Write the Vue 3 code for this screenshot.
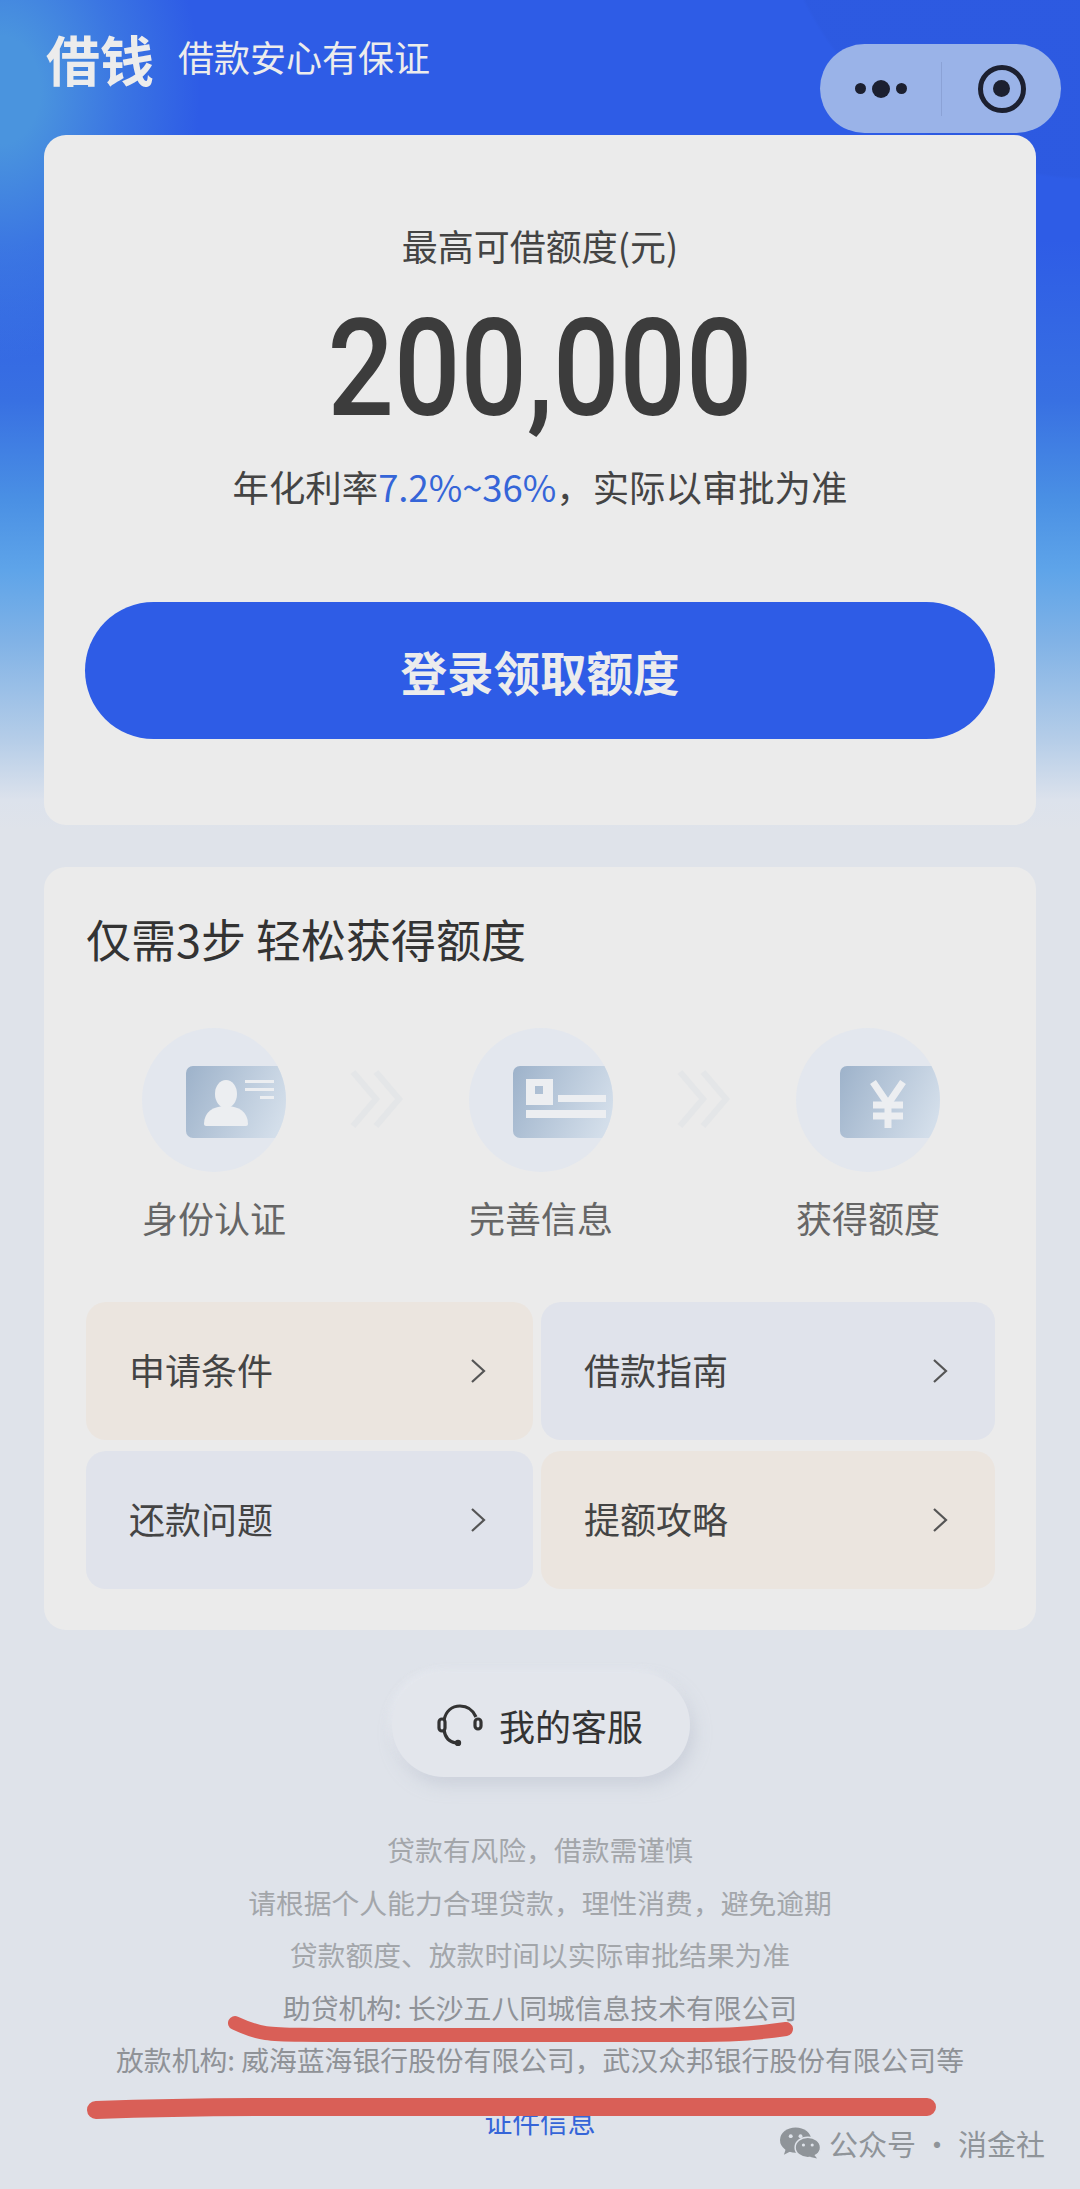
<script setup>
const steps = ['身份认证', '完善信息', '获得额度']
const tiles = [
  { label: '申请条件', tone: 'warm' },
  { label: '借款指南', tone: 'cool' },
  { label: '还款问题', tone: 'cool' },
  { label: '提额攻略', tone: 'warm' }
]
const notes = [
  '贷款有风险，借款需谨慎',
  '请根据个人能力合理贷款，理性消费，避免逾期',
  '贷款额度、放款时间以实际审批结果为准',
  '助贷机构: 长沙五八同城信息技术有限公司',
  '放款机构: 威海蓝海银行股份有限公司，武汉众邦银行股份有限公司等'
]
</script>

<template>
  <div class="page">
    <header class="head">
      <span class="brand">借钱</span>
      <span class="slogan">借款安心有保证</span>
      <div class="capsule">
        <div class="dots"><i></i><b></b><i></i></div>
        <div class="sep"></div>
        <div class="target"><span></span></div>
      </div>
    </header>

    <section class="card quota">
      <div class="quota-label">最高可借额度(元)</div>
      <div class="amount">200,000</div>
      <div class="rate">年化利率<em>7.2%~36%</em>，实际以审批为准</div>
      <button class="cta">登录领取额度</button>
    </section>

    <section class="card guide">
      <h2 class="title">仅需3步 轻松获得额度</h2>
      <div class="steps">
        <svg width="0" height="0" class="defs">
          <defs>
            <linearGradient id="cardFill" x1="0" y1="0" x2="1" y2="0.3">
              <stop offset="0" stop-color="#9db2ca" />
              <stop offset="1" stop-color="#d3deea" />
            </linearGradient>
            <clipPath id="disc"><circle cx="72" cy="72" r="72" /></clipPath>
          </defs>
        </svg>
        <template v-for="(step, idx) in steps" :key="step">
          <div class="step">
            <svg class="disc" viewBox="0 0 144 144">
              <circle cx="72" cy="72" r="72" fill="#e3e7ee" />
              <g clip-path="url(#disc)">
                <rect x="44" y="38" width="110" height="72" rx="7" fill="url(#cardFill)" />
              </g>
              <g v-if="idx === 0" fill="#eceef1">
                <ellipse cx="84" cy="66" rx="11" ry="14" />
                <path d="M62 96c0-12 9-18 22-18s22 6 22 18c0 1-1 2-2 2H64c-1 0-2-1-2-2z" />
                <rect x="103" y="52" width="29" height="3" />
                <rect x="103" y="60" width="29" height="3" />
                <rect x="118" y="68" width="14" height="3" />
              </g>
              <g v-else-if="idx === 1" fill="#eceef1">
                <path fill-rule="evenodd" d="M57 51h27v26H57zM66 58v8h8v-8z" />
                <rect x="89" y="67" width="48" height="7" />
                <rect x="57" y="82" width="80" height="8" />
              </g>
              <g v-else fill="none" stroke="#eceef1" stroke-width="7">
                <path d="M77 54l15 22 15-22M92 76v24" />
                <path d="M77 77h30M77 88h30" />
              </g>
            </svg>
            <div class="step-name">{{ step }}</div>
          </div>
          <svg v-if="idx < 2" class="arrows" viewBox="0 0 56 58" fill="none" stroke="#e4e6e8" stroke-width="6">
            <path d="M3 2l23 27-23 27M26 2l23 27-23 27" />
          </svg>
        </template>
      </div>
      <div class="tiles">
        <div v-for="tile in tiles" :key="tile.label" class="tile" :class="tile.tone">
          <span>{{ tile.label }}</span>
          <svg class="chev" viewBox="0 0 16 24" fill="none" stroke="#555" stroke-width="2.2">
            <path d="M2 1l12 11L2 23" />
          </svg>
        </div>
      </div>
    </section>

    <button class="service">
      <svg class="headset" viewBox="0 0 46 42" fill="none" stroke="#333" stroke-width="3.2">
        <path d="M7 16C9 7 15 2 23 2s13 4 16 11" />
        <path d="M7 26c1 7 5 12 12 13" />
        <rect x="2" y="15" width="6" height="12" rx="3" />
        <rect x="38" y="15" width="6" height="10" rx="3" />
        <circle cx="21" cy="39" r="1.6" fill="#333" />
      </svg>
      <span>我的客服</span>
    </button>

    <div class="notes">
      <p v-for="note in notes" :key="note">{{ note }}</p>
      <a class="license">证件信息</a>
    </div>

    <svg class="marks" viewBox="0 0 1080 2189" fill="none" stroke="#d95f57" stroke-linecap="round">
      <path d="M235 2023c30 14 40 11 90 12h350c50 0 70 0 111-6" stroke-width="14" />
      <path d="M96 2110c60-2 120-3 200-3h631" stroke-width="18" />
    </svg>

    <div class="watermark">
      <svg class="wechat" viewBox="0 0 42 32" fill="#8f9499">
        <ellipse cx="16" cy="13" rx="16" ry="13" />
        <path d="M6 22l-2 6 8-4z" />
        <ellipse cx="28.500" cy="20.500" rx="13" ry="10.500" stroke="#dfe3ea" stroke-width="1.500" />
        <path d="M35 28l3 4-8-2z" />
        <circle cx="11" cy="9" r="2" fill="#dfe3ea" />
        <circle cx="21" cy="9" r="2" fill="#dfe3ea" />
        <circle cx="24" cy="18" r="1.600" fill="#dfe3ea" />
        <circle cx="33" cy="18" r="1.600" fill="#dfe3ea" />
      </svg>
      <span>公众号 · 消金社</span>
    </div>
  </div>
</template>

<style>
html,
body {
  margin: 0;
  background: #dfe3ea;
}
</style>

<style scoped>
.page {
  position: relative;
  box-sizing: border-box;
  height: 2189px;
  overflow: hidden;
  padding: 0 44px;
  font-family: "Noto Sans CJK SC", "Noto Sans", sans-serif;
  color: #333;
  background:
    radial-gradient(ellipse 200px 270px at 0 90px, rgba(74, 148, 222, 1) 20%, rgba(74, 148, 222, 0.45) 60%, rgba(74, 148, 222, 0) 100%),
    radial-gradient(circle 320px at 1090px -140px, rgba(35, 70, 180, 0.1) 99%, rgba(35, 70, 180, 0) 100%),
    linear-gradient(180deg, #2e5ce6 0, #2e5ce6 240px, #3870e2 400px, #4a90e4 500px, #5ea4e9 570px, #80b2e6 640px, #b5cde8 740px, #dce2ec 800px, #dfe3ea 830px, #dfe3ea 100%);
}

.head {
  height: 135px;
  display: flex;
  align-items: flex-start;
  color: #ececec;
}

.brand {
  margin: 25px 0 0 2px;
  font-size: 54px;
  line-height: 68px;
  font-weight: 700;
}

.slogan {
  margin: 30px 0 0 24px;
  font-size: 36px;
  line-height: 52px;
}

.capsule {
  position: absolute;
  top: 44px;
  right: 19px;
  width: 241px;
  height: 89px;
  border-radius: 45px;
  background: #9ab3e8;
  display: flex;
  align-items: center;
}

.dots {
  width: 121px;
  display: flex;
  align-items: center;
  justify-content: center;
  gap: 6px;
}

.dots i {
  width: 11px;
  height: 11px;
  border-radius: 50%;
  background: #1c2030;
}

.dots b {
  width: 18px;
  height: 18px;
  border-radius: 50%;
  background: #1c2030;
}

.sep {
  width: 1px;
  height: 54px;
  background: #8ba2d6;
}

.target {
  flex: 1;
  display: flex;
  align-items: center;
  justify-content: center;
}

.target span {
  box-sizing: border-box;
  width: 48px;
  height: 48px;
  border: 5px solid #1c2030;
  border-radius: 50%;
  display: flex;
  align-items: center;
  justify-content: center;
}

.target span::after {
  content: "";
  width: 17px;
  height: 17px;
  border-radius: 50%;
  background: #1c2030;
}

.card {
  box-sizing: border-box;
  background: #ebebeb;
  border-radius: 22px;
}

.quota {
  height: 690px;
  padding: 84px 41px 0;
  text-align: center;
}

.quota-label {
  font-size: 36px;
  line-height: 52px;
  color: #444;
}

.amount {
  margin-top: 34px;
  font-family: Roboto, "Liberation Sans", sans-serif;
  font-size: 117px;
  line-height: 128px;
  font-weight: 500;
  color: #3c3c3c;
  transform: scaleY(1.16);
}

.rate {
  margin-top: 27px;
  font-size: 36.400px;
  line-height: 52px;
  color: #444;
}

.rate em {
  font-style: normal;
  color: #3565d8;
}

.cta {
  display: block;
  width: 100%;
  height: 137px;
  margin-top: 90px;
  border: 0;
  border-radius: 69px;
  background: #2e5ce6;
  color: #ececec;
  font: 700 46.500px/64px "Noto Sans CJK SC", sans-serif;
}

.guide {
  height: 763px;
  margin-top: 42px;
  padding: 40px 41px 0 42px;
}

.title {
  margin: 0;
  font-size: 45px;
  line-height: 64px;
  font-weight: 400;
  color: #333;
}

.defs {
  position: absolute;
}

.steps {
  display: flex;
  align-items: flex-start;
  justify-content: space-between;
  margin: 57px 0 0 56px;
  width: 798px;
}

.step {
  width: 144px;
  display: flex;
  flex-direction: column;
  align-items: center;
}

.disc {
  width: 144px;
  height: 144px;
}

.step-name {
  margin-top: 19px;
  font-size: 36px;
  line-height: 52px;
  color: #666;
  white-space: nowrap;
}

.arrows {
  width: 56px;
  height: 58px;
  margin-top: 42px;
}

.tiles {
  display: grid;
  grid-template-columns: 447px 454px;
  grid-auto-rows: 138px;
  gap: 11px 8px;
  margin-top: 59px;
}

.tile {
  display: flex;
  align-items: center;
  justify-content: space-between;
  padding: 0 47px 0 43px;
  border-radius: 20px;
  font-size: 36px;
  color: #444;
}

.tile span {
  margin-top: -4px;
}

.warm {
  background: #ebe5df;
}

.cool {
  background: #e0e3eb;
}

.chev {
  width: 16px;
  height: 24px;
}

.service {
  display: flex;
  align-items: center;
  gap: 16px;
  box-sizing: border-box;
  width: 298px;
  height: 104px;
  margin: 43px 0 0 348px;
  padding: 0 0 0 45px;
  border: 0;
  border-radius: 52px;
  background: #e3e6ec;
  box-shadow: 4px 8px 16px rgba(185, 192, 205, 0.5), -3px -3px 8px rgba(240, 242, 246, 0.6);
  font: 36px/52px "Noto Sans CJK SC", sans-serif;
  color: #333;
}

.headset {
  width: 46px;
  height: 42px;
}

.notes {
  margin-top: 46px;
  text-align: center;
  font-size: 27.800px;
  line-height: 52.500px;
  color: #a3a6aa;
}

.notes p {
  margin: 0;
}

.notes p:nth-child(n + 4) {
  color: #8f9297;
}

.license {
  display: block;
  margin-top: 9px;
  color: #3565d8;
}

.marks {
  position: absolute;
  inset: 0;
  width: 1080px;
  height: 2189px;
  pointer-events: none;
}

.watermark {
  position: absolute;
  left: 780px;
  top: 2122px;
  display: flex;
  align-items: center;
  gap: 8px;
  font-size: 29px;
  line-height: 42px;
  color: #8f9499;
}

.wechat {
  width: 41px;
  height: 32px;
}
</style>
